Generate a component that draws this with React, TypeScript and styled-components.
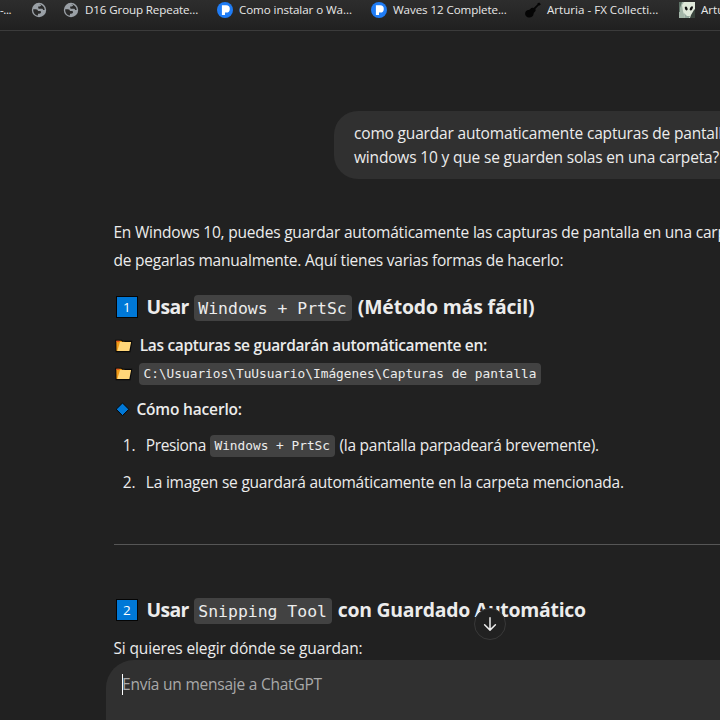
import React from "react";
import styled, { createGlobalStyle } from "styled-components";

const GlobalStyle = createGlobalStyle`
  * { box-sizing: border-box; }
  html, body { margin: 0; background: #212121; overflow: hidden; }
`;

const Window = styled.div`
  position: relative;
  display: flex;
  flex-direction: column;
  width: 720px;
  height: 720px;
  overflow: hidden;
  background: #212121;
  color: #ececec;
  font-family: "Open Sans", "Noto Sans", sans-serif;
`;

const BookmarkBar = styled.nav`
  display: flex;
  flex: none;
  height: 31px;
  border-bottom: 1px solid #3b3b3b;
  background: linear-gradient(#2d2d2d, #202020);
  overflow: hidden;
`;

const Bookmark = styled.div<{ $width: number; $tracking?: number }>`
  display: flex;
  flex: none;
  gap: 6px;
  width: ${(p) => p.$width}px;
  height: 20px;
  font-size: 11.6px;
  line-height: 20px;
  letter-spacing: ${(p) => p.$tracking ?? 0}px;
  color: #e8e8e8;
  white-space: nowrap;

  svg {
    flex: none;
    margin-top: 2px;
  }
`;

const Conversation = styled.main`
  display: flex;
  flex-direction: column;
  flex: none;
  height: 629px;
  padding: 80px 0 0 113px;
  overflow: hidden;
`;

const UserBubble = styled.div`
  display: flex;
  flex-direction: column;
  flex: none;
  width: 500px;
  margin-left: 221px;
  padding: 10px 20px;
  height: 68px;
  border-radius: 24px 0 0 24px;
  background: #303030;
`;

const Text = styled.span<{ $tracking?: number; $line?: number }>`
  font-size: 15.5px;
  line-height: ${(p) => p.$line ?? 28}px;
  letter-spacing: ${(p) => p.$tracking ?? -0.2}px;
  white-space: pre;
`;

const Strong = styled(Text)`
  font-weight: 600;
`;

const Title = styled(Text)`
  font-size: 19.4px;
  line-height: 32px;
  font-weight: 700;
`;

const Row = styled.div<{ $top?: number; $indent?: number; $height?: number }>`
  display: flex;
  align-items: flex-start;
  flex: none;
  height: ${(p) => p.$height ?? 28}px;
  margin-top: ${(p) => p.$top ?? 0}px;
  padding-left: ${(p) => p.$indent ?? 0.4}px;
`;

const Code = styled.code<{ $width: number }>`
  flex: none;
  width: ${(p) => p.$width}px;
  height: 22px;
  margin: 4px 4.5px 0 4px;
  padding-left: 4.5px;
  border-radius: 4px;
  background: #424242;
  font: 12.8px/22px "DejaVu Sans Mono", monospace;
  white-space: pre;
`;

const TitleCode = styled(Code)`
  height: 26px;
  margin: 4px 6px 0 5px;
  font-size: 16.45px;
  line-height: 27px;
`;

const Keycap = styled.span`
  display: flex;
  align-items: center;
  justify-content: center;
  flex: none;
  width: 22px;
  height: 22px;
  margin: 5px 8.4px 0 2.6px;
  border: 1px solid #050505;
  background: #0078d7;
  color: #fff;
  font-size: 13.5px;
  line-height: 20px;
`;

const IconSlot = styled.span<{ $width: number }>`
  display: flex;
  flex: none;
  width: ${(p) => p.$width}px;
  height: 28px;
  align-items: center;
  padding: 1px 0 0 1.6px;
`;

const ListNumber = styled(Text)`
  flex: none;
  width: 23px;
`;

const Divider = styled.hr`
  flex: none;
  width: 100%;
  height: 1px;
  margin: 48px 0 0 1px;
  border: 0;
  background: #565656;
`;

const Composer = styled.div`
  display: flex;
  flex: none;
  height: 60px;
  margin-left: 106px;
  padding: 14px 0 0 16px;
  border-top-left-radius: 28px;
  background: #303030;
`;

const Caret = styled.span`
  flex: none;
  width: 1px;
  height: 21px;
  margin-right: -1px;
  background: #fff;
`;

const Placeholder = styled(Text)`
  margin-top: -4px;
  color: #a9a9a9;
`;

const ScrollButton = styled.button`
  position: absolute;
  left: 474px;
  top: 608px;
  display: flex;
  align-items: center;
  justify-content: center;
  width: 32px;
  height: 32px;
  padding: 0;
  border: 1px solid #393939;
  border-radius: 50%;
  background: #212121;
`;

const Globe = () => (
  <svg width="16" height="16" viewBox="0 0 16 16">
    <circle cx="8" cy="8" r="7.2" fill="#9aa0a6" />
    <path
      d="M2.2 7.2h2.6c1.6 0 2.1.7 2.1 1.8h1.8c.9 0 1.3.5 1.3 1.3 0 1-.8 1.4-1.8 1.4H7v1.9c-2.9-.3-5-2.7-4.8-6.400zM7.9 2.3h2.2c.3 1.3-.4 2.2-1.6 2.2H7.200v1.5c0 .5.3.8.9.8h2.5c1 0 1.4.5 1.5 1.2h1.6A5.8 5.8 0 0 0 7.900 2.300z"
      fill="#2a2a2a"
    />
  </svg>
);

const BlueP = () => (
  <svg width="16" height="16" viewBox="0 0 16 16">
    <circle cx="8" cy="8" r="8" fill="#1f7cf5" />
    <path d="M4.9 3.300h4.300a3.600 3.600 0 0 1 0 7.200H8v2.400H4.900z" fill="#fff" />
  </svg>
);

const Guitar = () => (
  <svg width="16" height="16" viewBox="0 0 16 16">
    <path
      d="M14.200.4l1.700 1.800-1.400 1.400-.8-.1-3.400 3.600c.7 1 .5 2.200-.7 2.900-.8.5-.8 1-1 2-.4 2.200-2.200 3.800-4.600 3.600C1.700 15.400 0 13.500.1 11.400c.1-2.100 1.700-3.200 3.400-3.400 1.200-.1 1.500-.4 2-1.200.8-1.200 2-1.400 3.200-.9l3.800-3.700-.1-.7z"
      fill="#050505"
    />
  </svg>
);

const Alien = () => (
  <svg width="16" height="16" viewBox="0 0 16 16">
    <rect width="16" height="16" fill="#dfe8da" />
    <path d="M0 0h5L3 3l1 6 2 7H0z" fill="#a3b5a8" />
    <path d="M0 0h3L1 6v4H0z" fill="#5f7368" />
    <path d="M15 8l1-1v9h-5l1-3z" fill="#39443d" />
    <ellipse cx="7.200" cy="6.500" rx="1.300" ry="2" fill="#111" transform="rotate(-25 7.200 6.500)" />
    <ellipse cx="12.300" cy="6.300" rx="1.300" ry="2.300" fill="#111" transform="rotate(30 12.300 6.300)" />
    <path d="M5 11l3 3h3l-1 2H6z" fill="#93a69c" />
  </svg>
);

const Folder = () => (
  <svg width="18" height="14" viewBox="0 0 18 14">
    <path d="M.3.700h6.400l1 1.100h9.600L15.400 13.200H.7z" fill="#080808" />
    <path d="M1.300 1.800h4.900l1 1h2.300L7.500 12H1.500z" fill="#f09a16" />
    <path d="M5 2.900h11.100L14.400 12H2.300z" fill="#ffd679" />
    <path d="M1.300 1.800h3v1h-3z" fill="#e74824" />
  </svg>
);

const Diamond = () => (
  <svg width="15" height="15" viewBox="0 0 15 15">
    <path d="M7.500 1l6.300 6.300-6.300 6.300-6.300-6.300z" fill="#0078d7" stroke="#050505" />
  </svg>
);

const ArrowDown = () => (
  <svg width="14" height="16" viewBox="0 0 14 16" fill="none" stroke="#ececec" strokeWidth="1.500" strokeLinecap="round" strokeLinejoin="round">
    <path d="M7 1.800v12.200M1.600 8.800L7 14.100l5.400-5.300" />
  </svg>
);

export default function App() {
  return (
    <Window>
      <GlobalStyle />
      <BookmarkBar>
        <Bookmark $width={31} $tracking={-0.4}>-...</Bookmark>
        <Bookmark $width={32}><Globe /></Bookmark>
        <Bookmark $width={154} $tracking={-0.12}><Globe />D16 Group Repeate...</Bookmark>
        <Bookmark $width={154} $tracking={-0.08}><BlueP />Como instalar o Wa...</Bookmark>
        <Bookmark $width={154} $tracking={-0.09}><BlueP />Waves 12 Complete...</Bookmark>
        <Bookmark $width={154}><Guitar />Arturia - FX Collecti...</Bookmark>
        <Bookmark $width={154}><Alien />Arturia</Bookmark>
      </BookmarkBar>

      <Conversation>
        <UserBubble>
          <Text $line={24} $tracking={-0.175}>como guardar automaticamente capturas de pantalla en</Text>
          <Text $line={24} $tracking={-0.175}>windows 10 y que se guarden solas en una carpeta?</Text>
        </UserBubble>

        <Row $top={39}>
          <Text>En Windows 10, puedes guardar automáticamente las capturas de pantalla en una carpeta</Text>
        </Row>
        <Row>
          <Text $tracking={-0.22}>de pegarlas manualmente. Aquí tienes varias formas de hacerlo:</Text>
        </Row>

        <Row $top={17} $height={32}>
          <Keycap>1</Keycap>
          <Title $tracking={-0.6}>Usar</Title>
          <TitleCode $width={158}>Windows + PrtSc</TitleCode>
          <Title $tracking={-0.14}>(Método más fácil)</Title>
        </Row>

        <Row $top={8}>
          <IconSlot $width={26.4}><Folder /></IconSlot>
          <Strong $tracking={-0.34}>Las capturas se guardarán automáticamente en:</Strong>
        </Row>
        <Row>
          <IconSlot $width={21.6}><Folder /></IconSlot>
          <Code $width={402}>C:\Usuarios\TuUsuario\Imágenes\Capturas de pantalla</Code>
        </Row>
        <Row $top={8}>
          <IconSlot $width={23}><Diamond /></IconSlot>
          <Strong $tracking={-0.17}>Cómo hacerlo:</Strong>
        </Row>

        <Row $top={8} $indent={9.8}>
          <ListNumber>1.</ListNumber>
          <Text $tracking={-0.37}>Presiona</Text>
          <Code $width={125}>Windows + PrtSc</Code>
          <Text $tracking={-0.24}>(la pantalla parpadeará brevemente).</Text>
        </Row>
        <Row $top={9} $indent={9.8}>
          <ListNumber>2.</ListNumber>
          <Text $tracking={-0.215}>La imagen se guardará automáticamente en la carpeta mencionada.</Text>
        </Row>

        <Divider />

        <Row $top={49} $height={32}>
          <Keycap>2</Keycap>
          <Title $tracking={-0.6}>Usar</Title>
          <TitleCode $width={138}>Snipping Tool</TitleCode>
          <Title $tracking={-0.26}>con Guardado Automático</Title>
        </Row>
        <Row $top={8}>
          <Text $tracking={-0.13}>Si quieres elegir dónde se guardan:</Text>
        </Row>
      </Conversation>

      <Composer>
        <Caret />
        <Placeholder $tracking={-0.23}>Envía un mensaje a ChatGPT</Placeholder>
      </Composer>

      <ScrollButton aria-label="Bajar">
        <ArrowDown />
      </ScrollButton>
    </Window>
  );
}
